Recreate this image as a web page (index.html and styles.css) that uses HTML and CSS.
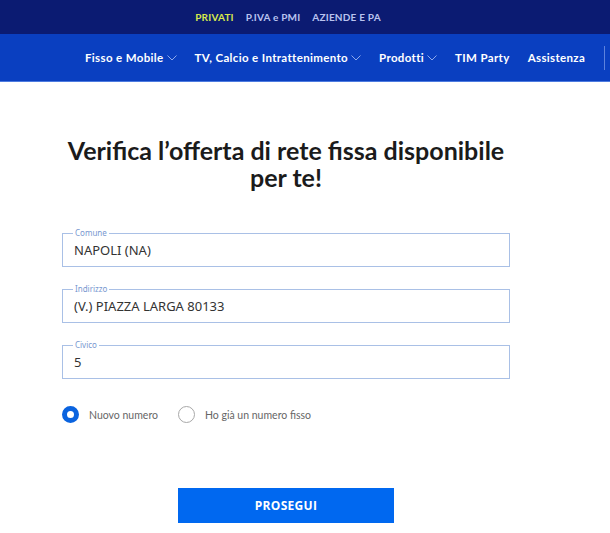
FILE: index.html
```html
<!DOCTYPE html>
<html lang="it">
<head>
  <meta charset="UTF-8">
  <title>Verifica copertura - TIM</title>
  <link rel="stylesheet" href="styles.css">
</head>
<body>
  <header>
    <div class="top-bar">
      <a class="active">PRIVATI</a>
      <a>P.IVA e PMI</a>
      <a>AZIENDE E PA</a>
    </div>
    <nav class="main-nav">
      <a>Fisso e Mobile <svg class="chev" viewBox="0 0 10 6"><path d="M0.5 0.5 L5 5 L9.5 0.5"/></svg></a>
      <a>TV, Calcio e Intrattenimento <svg class="chev" viewBox="0 0 10 6"><path d="M0.5 0.5 L5 5 L9.5 0.5"/></svg></a>
      <a>Prodotti <svg class="chev" viewBox="0 0 10 6"><path d="M0.5 0.5 L5 5 L9.5 0.5"/></svg></a>
      <a>TIM Party</a>
      <a>Assistenza</a>
      <span class="sep"></span>
    </nav>
  </header>

  <main class="verifica">
    <h1>Verifica l’offerta di rete fissa disponibile per te!</h1>

    <form class="form-verifica">
      <div class="field">
        <label>Comune</label>
        <input type="text" value="NAPOLI (NA)">
      </div>
      <div class="field">
        <label>Indirizzo</label>
        <input type="text" value="(V.) PIAZZA LARGA 80133">
      </div>
      <div class="field">
        <label>Civico</label>
        <input type="text" value="5">
      </div>

      <div class="radios">
        <span class="radio"><span class="dot checked"></span>Nuovo numero</span>
        <span class="radio"><span class="dot"></span>Ho già un numero fisso</span>
      </div>

      <button type="button">PROSEGUI</button>
    </form>
  </main>
</body>
</html>
```

FILE: styles.css
```css
body {
  margin: 0;
  font-family: 'Noto Sans', sans-serif;
  background: #fff;
}

.top-bar {
  height: 34px;
  background: #0b1b72;
  display: flex;
  align-items: center;
  justify-content: center;
  gap: 12px;
  padding-right: 34px;
}

.top-bar a {
  font-family: 'Lato', sans-serif;
  font-weight: 700;
  font-size: 10px;
  letter-spacing: 0.2px;
  color: #b9c3ef;
}

.top-bar a.active {
  color: #d7e84c;
}

.main-nav {
  height: 47px;
  background: #0a3fc0;
  border-bottom: 1px solid #4d7be0;
  display: flex;
  align-items: center;
  padding-left: 85px;
  gap: 18px;
}

.main-nav a {
  font-family: 'Lato', sans-serif;
  font-weight: 700;
  font-size: 11.5px;
  letter-spacing: 0.35px;
  color: #fff;
  display: flex;
  align-items: center;
  white-space: nowrap;
}

.chev {
  width: 10px;
  height: 6px;
  margin-left: 3px;
  fill: none;
  stroke: #8fa9ea;
  stroke-width: 1;
}

.sep {
  width: 1px;
  height: 24px;
  background: #5d82dd;
  margin-left: 1px;
}

.verifica {
  width: 572px;
  display: flex;
  flex-direction: column;
  align-items: center;
}

h1 {
  width: 452px;
  margin: 55px 0 42px;
  text-align: center;
  font-family: 'Lato', sans-serif;
  font-weight: 700;
  font-size: 25px;
  line-height: 27px;
  color: #1b1b1b;
}

.form-verifica {
  width: 448px;
  display: flex;
  flex-direction: column;
}

.field {
  position: relative;
  height: 34px;
  box-sizing: border-box;
  margin-bottom: 22px;
  padding: 0 11px;
  border: 1px solid #a9c0e6;
  display: flex;
  align-items: center;
}

.field:nth-child(3) {
  margin-bottom: 0;
}

.field label {
  position: absolute;
  top: -6px;
  left: 10px;
  padding: 0 2px;
  background: #fff;
  font-size: 8px;
  line-height: 10px;
  color: #7898d0;
}

input {
  width: 100%;
  border: none;
  outline: none;
  padding: 0;
  font-family: 'Noto Sans', sans-serif;
  font-size: 13px;
  color: #333;
  background: transparent;
}

.radios {
  display: flex;
  gap: 20px;
  margin-top: 27px;
}

.radio {
  display: flex;
  align-items: center;
  font-family: 'Lato', sans-serif;
  font-size: 10.5px;
  color: #666;
}

.dot {
  width: 17px;
  height: 17px;
  box-sizing: border-box;
  border: 1px solid #a8a8a8;
  border-radius: 50%;
  margin-right: 10px;
}

.dot.checked {
  border: 5px solid #0a63df;
}

button {
  align-self: center;
  width: 216px;
  height: 35px;
  margin-top: 65px;
  background: #0068f0;
  color: #fff;
  border: none;
  font-family: 'Open Sans', sans-serif;
  font-weight: 700;
  font-size: 12px;
  letter-spacing: 0.3px;
  cursor: pointer;
}
```
